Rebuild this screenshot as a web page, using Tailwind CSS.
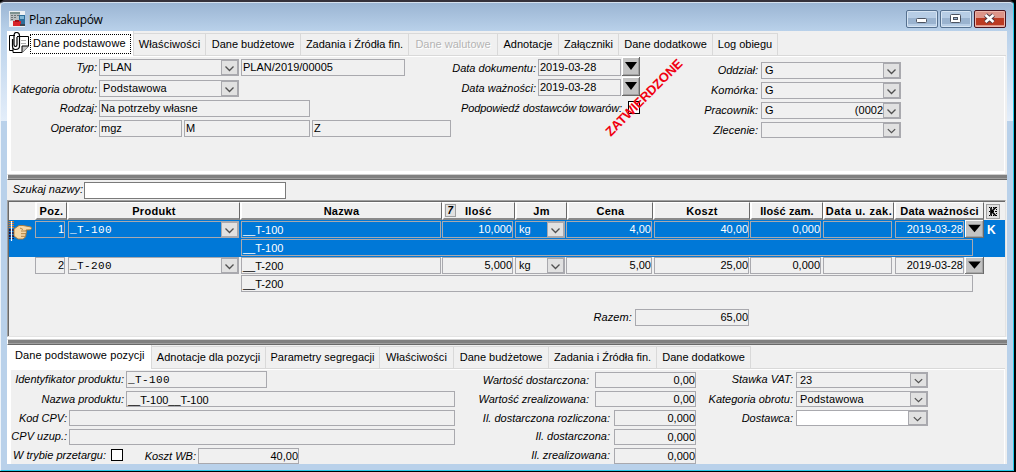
<!DOCTYPE html>
<html lang="pl">
<head>
    <meta charset="UTF-8">
    <meta name="viewport" content="width=device-width, initial-scale=1.0">
    <title>Plan zakupów</title>
    <script src="https://cdn.jsdelivr.net/npm/@tailwindcss/browser@4"></script>
    <style>
        @layer components {
            body {
                font-family: "Liberation Sans", Arial, sans-serif;
                font-size: 11px;
                color: #000;
            }
            /* Read-only field */
            .f {
                display: flex;
                flex-shrink: 0;
                height: 17px;
                line-height: 15px;
                border: 1px solid #a9a9ae;
                padding: 0 1px;
                white-space: pre;
                overflow: hidden;
            }
            .f.r { justify-content: flex-end; padding-right: 0; }
            /* Drop-down field: text on the left, chevron box on the right */
            .f.s { padding: 0 0 0 3px; justify-content: space-between; }
            .s svg { width: 17px; height: 100%; flex-shrink: 0; background: #e1e1e1; border: 1px solid #a9a9ae; }
            .l { font-style: italic; text-align: right; white-space: nowrap; flex-shrink: 0; line-height: 17px; }
            .h {
                flex-shrink: 0;
                height: 18px;
                line-height: 16px;
                font-weight: bold;
                letter-spacing: 0.3px;
                text-align: center;
                white-space: nowrap;
                border-top: 1px solid #fff;
                border-left: 2px solid #fff;
                border-right: 1px solid #696969;
                border-bottom: 2px solid #8a8a8a;
            }
            .t {
                flex-shrink: 0;
                height: 23px;
                line-height: 21px;
                text-align: center;
                white-space: nowrap;
                border-top: 1px solid #d9d9d9;
                border-right: 1px solid #d9d9d9;
                border-bottom: 1px solid #d9d9d9;
            }
        }
    </style>
</head>
<body class="bg-black w-[1016px] h-[472px] overflow-hidden">

    <!-- Shared icon shapes -->
    <svg class="hidden">
        <symbol id="chev" viewBox="0 0 15 13"><path d="M3.5 5.5 L7.5 9.5 L11.5 5.5" fill="none" stroke="#505050" stroke-width="1.3"/></symbol>
        <symbol id="drop" viewBox="0 0 18 19" preserveAspectRatio="none">
            <rect width="18" height="19" fill="#696969"/><rect width="17" height="18" fill="#fff"/><rect x="1" y="1" width="16" height="17" fill="#a0a0a0"/><rect x="1" y="1" width="15" height="16" fill="#c3c3c3"/>
            <path d="M3 5 H15 L9 13 Z" fill="#000"/>
        </symbol>
    </svg>

    <div class="w-[1014px] h-[471px] bg-[#b9d1ea] border-l border-l-[#eef4fa] border-r border-r-[#25c8e8] border-b border-b-[#25c8e8] border-t-2 border-t-[#35313a] rounded-t-[5px] relative">

        <!-- Title bar -->
        <div class="h-[29px] flex items-start bg-linear-to-b from-[#9bb5d3] to-[#b9d1ea] border-t border-[#d5e1ee] rounded-t-[4px]">
            <svg class="w-4 h-4 ml-2 mt-2" viewBox="0 0 16 16" shape-rendering="crispEdges">
                <rect x="0" y="0" width="16" height="16" fill="#eef1f4"/>
                <rect x="1" y="1" width="10" height="9" fill="#b9bec0"/>
                <path d="M1 1h10v2H1z" fill="#7d9290"/>
                <path d="M2 4h2v1H2zM5 4h2v1H5zM8 4h2v1H8zM2 6h2v1H2zM5 6h2v1H5zM2 8h2v1H2z" fill="#6d7476"/>
                <rect x="10" y="4" width="6" height="9" fill="#2d6e9b"/>
                <rect x="11" y="5" width="4" height="3" fill="#7fb5d4"/>
                <rect x="4" y="10" width="8" height="5" fill="#d8232a"/>
                <rect x="6" y="9" width="4" height="2" fill="#a01018"/>
                <rect x="11" y="13" width="5" height="2" fill="#3d4650"/>
            </svg>
            <div class="ml-[4px] mt-[8px] text-[12px] leading-[18px] tracking-[-0.3px] font-['Open_Sans',sans-serif]">Plan zakupów</div>
            <div class="ml-auto mr-[7px] mt-[7px] flex gap-[2px]">
                <svg class="w-8 h-[18px]" viewBox="0 0 32 18">
                    <rect x=".5" y=".5" width="31" height="17" rx="1.5" fill="#b7cde5" stroke="#55708f"/>
                    <rect x="1.5" y="1.5" width="29" height="15" rx="1" fill="none" stroke="#d7e5f3"/>
                    <rect x="2" y="8" width="28" height="6" fill="#9ab3cf"/>
                    <rect x="10.5" y="8.500" width="10" height="4" rx="1" fill="#fff" stroke="#4c5360"/>
                </svg>
                <svg class="w-8 h-[18px]" viewBox="0 0 32 18">
                    <rect x=".5" y=".5" width="31" height="17" rx="1.5" fill="#b7cde5" stroke="#55708f"/>
                    <rect x="1.5" y="1.5" width="29" height="15" rx="1" fill="none" stroke="#d7e5f3"/>
                    <rect x="2" y="8" width="28" height="6" fill="#9ab3cf"/>
                    <rect x="10.5" y="4.500" width="10" height="8" rx="1" fill="#fff" stroke="#4c5360"/>
                    <rect x="13.500" y="7.500" width="4" height="2" fill="#9ab3cf" stroke="#4c5360"/>
                </svg>
                <svg class="w-8 h-[18px]" viewBox="0 0 32 18">
                    <rect x=".5" y=".5" width="31" height="17" rx="1.5" fill="#dd9488" stroke="#4a1420"/>
                    <rect x="1.5" y="1.5" width="29" height="15" rx="1" fill="none" stroke="#ecb5aa"/>
                    <rect x="2" y="8" width="28" height="7" fill="#bb3a22"/>
                    <path d="M11.500 5 L19.500 12 M19.500 5 L11.500 12" stroke="#4c3a45" stroke-width="4.400"/>
                    <path d="M11.500 5 L19.500 12 M19.500 5 L11.500 12" stroke="#fff" stroke-width="2.600"/>
                </svg>
            </div>
        </div>

        <div class="flex">
            <div class="w-[6px] h-[90px] bg-linear-to-b from-[#b9d1ea] to-[#e4eefa]"></div>

            <!-- Client area -->
            <div class="w-[1000px] h-[433px] bg-[#f0f0f0] overflow-hidden">

                <!-- Upper tabs -->
                <div class="flex h-[25px] relative">
                    <div class="w-[127px] h-[25px] bg-white flex border-r border-[#d9d9d9] shrink-0">
                        <svg class="w-[21px] h-[22px] ml-[2px] mt-[1px] shrink-0" viewBox="0 0 21 22" fill="none" stroke="#000">
                            <path d="M6 3.500 H.5 V18.500 H12.500" stroke-width="1"/>
                            <path d="M8 4.500 H19.500 V14 L13 20.500 H4 V16" fill="#fff"/>
                            <path d="M19.500 14 H13 V20.500" fill="#c8c8c8"/>
                            <path d="M12 8.500 H17 M12 11.500 H17" stroke="#b0b0b0"/>
                            <path d="M3.500 7 V14 Q3.500 17.500 6.500 17.500 Q10.500 17.500 10.500 14 V4 Q10.500 .5 7.500 .5 Q5 .5 5 4 V12.500 Q5 14.500 6.500 14.500 Q8 14.500 8 12.500 V5" stroke-width="1.200"/>
                        </svg>
                        <div class="w-[101px] h-[20px] mt-[3px] border border-dotted border-black leading-[16px] pl-[2px] whitespace-nowrap tracking-[0.15px]">Dane podstawowe</div>
                    </div>
                    <div class="flex mt-[2px]">
                        <div class="t w-[72px] tracking-[0.15px]">Właściwości</div>
                        <div class="t w-[95px]">Dane budżetowe</div>
                        <div class="t w-[108px]">Zadania i Źródła fin.</div>
                        <div class="t w-[89px] text-[#b4b4b4] [text-shadow:1px_1px_0_#fff]">Dane walutowe</div>
                        <div class="t w-[61px]">Adnotacje</div>
                        <div class="t w-[60px]">Załączniki</div>
                        <div class="t w-[94px]">Dane dodatkowe</div>
                        <div class="t w-[65px]">Log obiegu</div>
                        <div class="w-[228px] h-[23px] border-b border-[#d9d9d9]"></div>
                    </div>
                </div>

                <!-- Document header panel -->
                <div class="h-[118px] w-[998px] bg-[#f0f0f0] border-t border-l-4 border-r border-b-3 border-white flex">
                    <div class="w-[440px] shrink-0 flex flex-col gap-[3px] pt-[2px]">
                        <div class="flex mb-[1px]">
                            <div class="l w-[86px] mr-[2px]">Typ:</div>
                            <div class="f s w-[140px]">PLAN<svg><use href="#chev"/></svg></div>
                            <div class="f w-[164px] ml-[2px]">PLAN/2019/00005</div>
                        </div>
                        <div class="flex">
                            <div class="l w-[86px] mr-[2px] mt-[1px] -mb-[1px]">Kategoria obrotu:</div>
                            <div class="f s w-[140px] tracking-[0.15px]">Podstawowa<svg><use href="#chev"/></svg></div>
                        </div>
                        <div class="flex">
                            <div class="l w-[86px] mr-[2px]">Rodzaj:</div>
                            <div class="f w-[211px]">Na potrzeby własne</div>
                        </div>
                        <div class="flex gap-[2px]">
                            <div class="l w-[86px]">Operator:</div>
                            <div class="f w-[83px]">mgz</div>
                            <div class="f w-[126px]">M</div>
                            <div class="f w-[139px]">Z</div>
                        </div>
                    </div>
                    <div class="w-[189px] shrink-0 relative flex flex-col">
                        <div class="flex h-[20px]">
                            <div class="l w-[85px] mt-[3px] mr-[2px]">Data dokumentu:</div>
                            <div class="f w-[83px] mt-[2px] mr-[1px]">2019-03-28</div>
                            <svg class="w-[18px] h-[19px] shrink-0"><use href="#drop"/></svg>
                        </div>
                        <div class="flex h-[20px]">
                            <div class="l w-[85px] mt-[3px] mr-[2px]">Data ważności:</div>
                            <div class="f w-[83px] mt-[2px] mr-[1px]">2019-03-28</div>
                            <svg class="w-[18px] h-[19px] shrink-0"><use href="#drop"/></svg>
                        </div>
                        <div class="flex h-[20px]">
                            <div class="l w-[171px] mt-[3px] mr-[6px] tracking-[-0.12px]">Podpowiedź dostawców towarów:</div>
                            <div class="w-[12px] h-[13px] mt-[4px] bg-white border border-black shrink-0"></div>
                        </div>
                        <!-- Approval stamp -->
                        <div class="absolute left-[142px] top-[32px] w-[102px] h-[18px] text-center leading-[18px] text-[13px] font-bold tracking-[-0.1px] text-[#f00010] -rotate-45">ZATWIERDZONE</div>
                    </div>
                    <div class="w-[261px] shrink-0 flex flex-col gap-[3px] pt-[5px]">
                        <div class="flex"><div class="l w-[118px] mr-[3px]">Oddział:</div><div class="f s w-[140px]">G<svg><use href="#chev"/></svg></div></div>
                        <div class="flex"><div class="l w-[118px] mr-[3px]">Komórka:</div><div class="f s w-[140px]">G<svg><use href="#chev"/></svg></div></div>
                        <div class="flex"><div class="l w-[118px] mr-[3px]">Pracownik:</div><div class="f s w-[140px]">G<span class="ml-auto">(0002</span><svg><use href="#chev"/></svg></div></div>
                        <div class="flex"><div class="l w-[118px] mr-[3px]">Zlecenie:</div><div class="f s w-[140px] h-[16px]"><span></span><svg><use href="#chev"/></svg></div></div>
                    </div>
                </div>

                <!-- Splitter -->
                <div class="h-[6px] bg-[#808080] border-t border-t-[#d0d0d0] border-b border-b-[#696969] border-l border-l-white flex flex-col justify-end"><div class="h-px bg-[#a0a0a0]"></div></div>

                <!-- Search by name -->
                <div class="h-[20px] flex pt-[2px]">
                    <div class="l w-[76px] mr-[1px] leading-[15px]">Szukaj nazwy:</div>
                    <div class="w-[202px] h-[17px] bg-white border border-[#7a7a7a]"></div>
                </div>

                <!-- Items table -->
                <div class="h-[137px] w-[999px] border-t border-l border-[#a0a0a0] border-b border-b-[#e3e3e3] border-r border-r-[#e3e3e3]">
                    <div class="h-[135px] border-t border-l border-[#696969]">
                        <div class="flex h-[18px]">
                            <div class="w-[26px] shrink-0"></div>
                            <div class="h w-[32px]">Poz.</div>
                            <div class="h w-[173px]">Produkt</div>
                            <div class="h w-[202px]">Nazwa</div>
                            <div class="h w-[73px] flex">
                                <span class="w-[11px] h-[13px] mt-[1px] ml-[1px] bg-[#e1e1e1] border border-[#a0a0a0] leading-[11px] italic text-[10px]">7</span>
                                <span class="ml-[9px]">Ilość</span>
                            </div>
                            <div class="h w-[52px]">Jm</div>
                            <div class="h w-[86px]">Cena</div>
                            <div class="h w-[97px]">Koszt</div>
                            <div class="h w-[73px] tracking-[0.1px]">Ilość zam.</div>
                            <div class="h w-[71px] tracking-[0.5px]">Data u. zak.</div>
                            <div class="h w-[90px] tracking-[0.2px]">Data ważności</div>
                            <div class="w-[14px] h-[15px] ml-[2px] mt-[2px] border border-[#a0a0a0] bg-[#e1e1e1] shrink-0">
                                <svg class="w-3 h-[13px]" viewBox="0 0 12 13"><path d="M4 2.500 V10.500 M8.500 2.500 L4.800 6.500 L8.500 10.500" fill="none" stroke="#000" stroke-width="1.700"/><path d="M2 2.500 H10 M2 10.500 H10 M2 6.500 H10" stroke="#000" stroke-dasharray="1 1"/><path d="M9.500 2 V11" stroke="#000" stroke-dasharray="1 1"/></svg>
                            </div>
                        </div>

                        <!-- Selected row -->
                        <div class="h-[37px] bg-[#0078d7] text-white pt-px">
                            <div class="flex h-[18px]">
                                <svg class="w-[23px] h-[21px] mr-[3px] shrink-0 overflow-visible" viewBox="0 0 23 21">
                                    <path d="M1 0 V8 M4 0 V8" stroke="#e07820" stroke-width="2" stroke-dasharray="1 1"/>
                                    <path d="M1 8 V18 M4 8 V18" stroke="#1a1a50" stroke-width="2" stroke-dasharray="2 1"/>
                                    <path d="M2.500 0 V20" stroke="#fff" stroke-width="1.200"/>
                                    <path d="M5 8 L10 4.500 H14 L22 6 Q23.500 7.500 21.500 8.800 L17 9 L17.500 11 L17 13 L16.500 16 L14 18 H9 L5 15 Z" fill="#f6d7a6" stroke="#a87838" stroke-width=".9"/>
                                    <path d="M12 10 H17 M12 12.700 H17 M12 15.300 H16 M11 7 L14 8.500" stroke="#a87838" stroke-width=".9"/>
                                </svg>
                                <div class="f r w-[30px] mr-[3px]">1</div>
                                <div class="f s w-[171px] mr-[2px] font-['Liberation_Mono',monospace] tracking-[0.4px]"><span class="-ml-[2px] leading-[17px]">_T-100</span><svg><use href="#chev"/></svg></div>
                                <div class="f w-[200px] mr-px leading-[17px]">__T-100</div>
                                <div class="f r w-[71px] mr-[2px]">10,000</div>
                                <div class="f s w-[50px] mr-px">kg<svg><use href="#chev"/></svg></div>
                                <div class="f r w-[86px] mr-[2px]">4,00</div>
                                <div class="f r w-[95px] mr-px">40,00</div>
                                <div class="f r w-[71px] mr-[2px]">0,000</div>
                                <div class="f r w-[69px] mr-[3px]"></div>
                                <div class="f r w-[69px] mr-px">2019-03-28</div>
                                <svg class="w-[19px] h-[18px] -mt-px shrink-0"><use href="#drop"/></svg>
                                <b class="ml-[3px] leading-[19px] text-[12px]">K</b>
                            </div>
                            <div class="f w-[732px] ml-[232px] leading-[17px]">__T-100</div>
                        </div>

                        <!-- Second row -->
                        <div class="h-[37px]">
                            <div class="flex h-[18px]">
                                <div class="f r w-[30px] ml-[26px] mr-[3px]">2</div>
                                <div class="f s w-[171px] mr-[2px] font-['Liberation_Mono',monospace] tracking-[0.4px]"><span class="-ml-[2px] leading-[17px]">_T-200</span><svg><use href="#chev"/></svg></div>
                                <div class="f w-[200px] mr-px leading-[17px]">__T-200</div>
                                <div class="f r w-[71px] mr-[2px]">5,000</div>
                                <div class="f s w-[50px] mr-px">kg<svg><use href="#chev"/></svg></div>
                                <div class="f r w-[86px] mr-[2px]">5,00</div>
                                <div class="f r w-[95px] mr-px">25,00</div>
                                <div class="f r w-[71px] mr-[2px]">0,000</div>
                                <div class="f r w-[69px] mr-[3px]"></div>
                                <div class="f r w-[69px] mr-px">2019-03-28</div>
                                <svg class="w-[19px] h-[17px] shrink-0"><use href="#drop"/></svg>
                            </div>
                            <div class="f w-[732px] ml-[232px] leading-[17px]">__T-200</div>
                        </div>

                        <!-- Total -->
                        <div class="flex mt-[15px]">
                            <div class="l w-[623px] mr-[3px] tracking-[0.1px]">Razem:</div>
                            <div class="f r w-[114px]">65,00</div>
                        </div>
                    </div>
                </div>

                <!-- Splitter -->
                <div class="h-[2px] bg-white"></div>
                <div class="h-[6px] bg-[#808080] border-t border-t-[#d0d0d0] border-b border-b-[#696969] border-l border-l-white flex flex-col justify-end"><div class="h-px bg-[#a0a0a0]"></div></div>

                <!-- Lower tabs -->
                <div class="flex h-[24px]">
                    <div class="w-[145px] h-[24px] bg-white border-r border-[#d9d9d9] pl-[8px] leading-[21px] shrink-0 whitespace-nowrap tracking-[0.1px]">Dane podstawowe pozycji</div>
                    <div class="flex mt-[1px]">
                        <div class="t w-[114px]">Adnotacje dla pozycji</div>
                        <div class="t w-[114px]">Parametry segregacji</div>
                        <div class="t w-[74px] tracking-[0.1px]">Właściwości</div>
                        <div class="t w-[95px]">Dane budżetowe</div>
                        <div class="t w-[108px]">Zadania i Źródła fin.</div>
                        <div class="t w-[94px]">Dane dodatkowe</div>
                        <div class="w-[254px] h-[23px] border-b border-[#d9d9d9]"></div>
                    </div>
                </div>

                <!-- Item details panel -->
                <div class="h-[96px] w-[998px] border-t border-l-4 border-r border-white flex">
                    <div class="w-[444px] shrink-0 flex flex-col gap-[3px] pt-[1px]">
                        <div class="flex">
                            <div class="l w-[113px] mr-[2px]">Identyfikator produktu:</div>
                            <div class="f w-[141px] font-['Liberation_Mono',monospace] tracking-[0.4px] leading-[16px]">_T-100</div>
                        </div>
                        <div class="flex">
                            <div class="l w-[113px] mr-[2px] h-4">Nazwa produktu:</div>
                            <div class="f w-[329px] h-4 leading-[17px]">__T-100__T-100</div>
                        </div>
                        <div class="flex">
                            <div class="l w-[56px] mr-[2px] h-4">Kod CPV:</div>
                            <div class="f w-[386px] h-4"></div>
                        </div>
                        <div class="flex">
                            <div class="l w-[56px] mr-[2px] h-4 leading-[14px]">CPV uzup.:</div>
                            <div class="f w-[386px] h-4"></div>
                        </div>
                        <div class="flex">
                            <div class="l w-[95px] h-4 leading-[15px]">W trybie przetargu:</div>
                            <div class="w-[12px] h-[12px] border border-black bg-white ml-[5px] mt-px shrink-0"></div>
                            <div class="l w-[73px] mr-[2px] h-4">Koszt WB:</div>
                            <div class="f r w-[101px] h-4">40,00</div>
                        </div>
                    </div>
                    <div class="w-[241px] shrink-0 flex flex-col gap-[3px] pt-[2px]">
                        <div class="flex justify-end"><div class="l h-4">Wartość dostarczona:</div><div class="f r w-[101px] h-4 ml-[6px]">0,00</div></div>
                        <div class="flex justify-end"><div class="l h-4">Wartość zrealizowana:</div><div class="f r w-[101px] h-4 ml-[6px]">0,00</div></div>
                        <div class="flex justify-end"><div class="l h-4">Il. dostarczona rozliczona:</div><div class="f r w-[82px] h-4 ml-[4px]">0,000</div></div>
                        <div class="flex justify-end"><div class="l h-4 leading-[15px]">Il. dostarczona:</div><div class="f r w-[82px] h-4 ml-[4px]">0,000</div></div>
                        <div class="flex justify-end"><div class="l h-4 leading-[15px]">Il. zrealizowana:</div><div class="f r w-[82px] h-4 ml-[4px]">0,000</div></div>
                    </div>
                    <div class="w-[232px] shrink-0 flex flex-col gap-[3px] pt-[2px]">
                        <div class="flex justify-end"><div class="l h-4 leading-[15px]">Stawka VAT:</div><div class="f s w-[132px] h-4 ml-[3px]">23<svg><use href="#chev"/></svg></div></div>
                        <div class="flex justify-end"><div class="l h-4">Kategoria obrotu:</div><div class="f s w-[132px] h-4 ml-[3px] tracking-[0.15px]">Podstawowa<svg><use href="#chev"/></svg></div></div>
                        <div class="flex justify-end"><div class="l h-4">Dostawca:</div><div class="f s w-[132px] h-4 ml-[3px] bg-white"><span></span><svg class="w-[19px]"><use href="#chev"/></svg></div></div>
                    </div>
                </div>
            </div>

            <div class="w-[6px] h-[90px] bg-linear-to-b from-[#b9d1ea] to-[#e4eefa]"></div>
        </div>
    </div>

</body>
</html>
